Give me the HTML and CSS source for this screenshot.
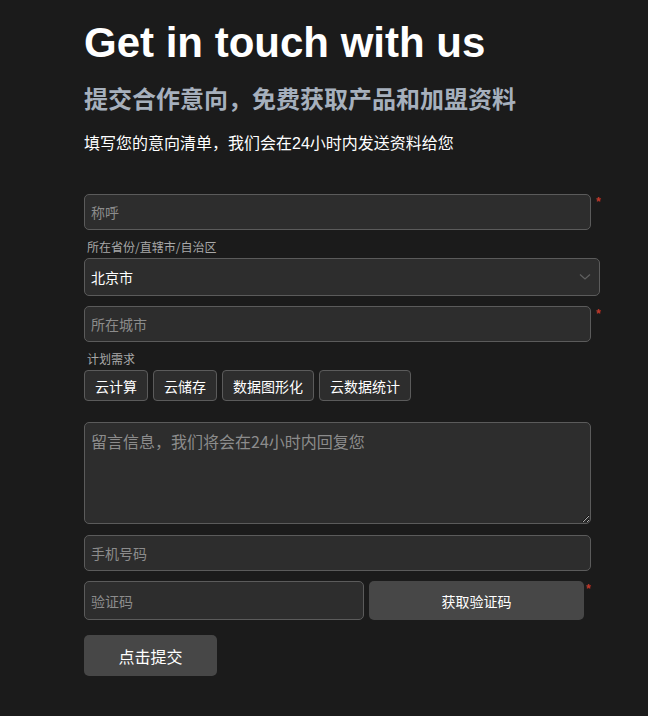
FILE: index.html
```html
<!DOCTYPE html>
<html lang="zh-CN">
<head>
	<meta charset="UTF-8">
	<title>Get in touch with us</title>
	<link rel="stylesheet" href="styles.css">
</head>
<body>
	<div class="contact">
		<h1 class="title">Get in touch with us</h1>
		<h2 class="subtitle">提交合作意向，免费获取产品和加盟资料</h2>
		<p class="intro">填写您的意向清单，我们会在24小时内发送资料给您</p>

		<form class="form">
			<div class="row">
				<input class="field" type="text" placeholder="称呼">
				<span class="star">*</span>
			</div>

			<label class="label">所在省份/直辖市/自治区</label>
			<div class="select">
				<span>北京市</span>
				<svg class="arrow" width="12" height="8" viewBox="0 0 12 8">
					<path d="M1 1.5 L6 6 L11 1.5" fill="none" stroke="#5f5f5f" stroke-width="1.3"/>
				</svg>
			</div>

			<div class="row city">
				<input class="field" type="text" placeholder="所在城市">
				<span class="star">*</span>
			</div>

			<label class="label">计划需求</label>
			<div class="tags">
				<button type="button" class="tag">云计算</button>
				<button type="button" class="tag">云储存</button>
				<button type="button" class="tag">数据图形化</button>
				<button type="button" class="tag">云数据统计</button>
			</div>

			<textarea class="message" placeholder="留言信息，我们将会在24小时内回复您"></textarea>

			<div class="row phone">
				<input class="field" type="text" placeholder="手机号码">
			</div>

			<div class="row code">
				<input class="field code-field" type="text" placeholder="验证码">
				<button type="button" class="code-btn">获取验证码</button>
				<span class="star">*</span>
			</div>

			<button type="button" class="submit">点击提交</button>
		</form>
	</div>
</body>
</html>
```

FILE: styles.css
```css
*{
	margin:0;
	padding:0;
	box-sizing: border-box;
}
html,body{
	background: #1b1b1b;
}
body{
	font-family: "Liberation Sans", "Noto Sans CJK SC", sans-serif;
	color: #fff;
}
.contact{
	padding: 19px 0 0 84px;
}
.title{
	font-size: 42px;
	line-height: 48px;
	font-weight: bold;
	color: #fff;
}
.subtitle{
	margin-top: 17px;
	font-size: 24px;
	line-height: 32px;
	font-weight: bold;
	color: #a6b0bd;
}
.intro{
	margin-top: 16px;
	font-size: 16px;
	line-height: 24px;
}

.form{
	margin-top: 38px;
	width: 530px;
	display: flex;
	flex-direction: column;
}
.row{
	display: flex;
	align-items: flex-start;
}
.field{
	width: 507px;
	height: 36px;
	padding: 0 6px;
	background: #2d2d2d;
	border: 1px solid #5b5b5b;
	border-radius: 5px;
	color: #fff;
	font-family: "Noto Sans CJK SC", sans-serif;
	font-size: 14px;
	outline: none;
}
.field::placeholder,
.message::placeholder{
	color: #8c8c8c;
}
.star{
	margin: 0 0 0 5px;
	color: #c0392b;
	font-size: 12px;
	line-height: 16px;
	font-weight: bold;
}

.label{
	margin: 10px 0 0 3px;
	font-family: "Noto Sans CJK SC", sans-serif;
	font-size: 12px;
	line-height: 14px;
	color: #a8a8a8;
}
.select{
	margin-top: 4px;
	width: 516px;
	height: 38px;
	padding: 0 8px 0 6px;
	display: flex;
	align-items: center;
	justify-content: space-between;
	background: #2d2d2d;
	border: 1px solid #5b5b5b;
	border-radius: 5px;
	font-family: "Noto Sans CJK SC", sans-serif;
	font-size: 14px;
	color: #fff;
}

.city{
	margin-top: 10px;
}

.tags{
	margin-top: 4px;
	display: flex;
	gap: 5px;
}
.tag{
	height: 31px;
	padding: 0 10px;
	background: #2d2d2d;
	border: 1px solid #5b5b5b;
	border-radius: 4px;
	color: #fff;
	font-family: "Noto Sans CJK SC", sans-serif;
	font-size: 14px;
}

.message{
	margin-top: 21px;
	width: 507px;
	height: 102px;
	padding: 6px 6px;
	background: #2d2d2d;
	border: 1px solid #5b5b5b;
	border-radius: 5px;
	color: #fff;
	font-family: "Noto Sans CJK SC", sans-serif;
	font-size: 16px;
	line-height: 24px;
	outline: none;
}

.phone{
	margin-top: 11px;
}
.code{
	margin-top: 10px;
}
.code-field{
	width: 280px;
	height: 39px;
}
.code-btn{
	margin-left: 5px;
	width: 215px;
	height: 39px;
	background: #474747;
	border: none;
	border-radius: 5px;
	color: #fff;
	font-family: "Noto Sans CJK SC", sans-serif;
	font-size: 14px;
}
.code .star{
	margin-left: 2px;
}

.submit{
	margin-top: 15px;
	width: 133px;
	height: 41px;
	background: #474747;
	border: none;
	border-radius: 5px;
	color: #fff;
	font-family: "Noto Sans CJK SC", sans-serif;
	font-size: 16px;
}
```
